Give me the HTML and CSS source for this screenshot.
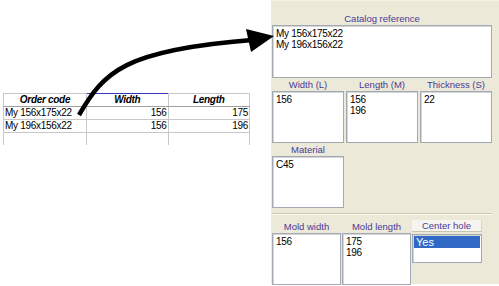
FILE: index.html
```html
<!DOCTYPE html>
<html>
<head>
<meta charset="utf-8">
<link rel="stylesheet" href="styles.css">
</head>
<body>
<div class="page">
  <div class="sheet">
    <table class="grid">
      <tr class="head">
        <th class="c1">Order code</th>
        <th class="c2 sel">Width</th>
        <th class="c3">Length</th>
      </tr>
      <tr>
        <td class="c1">My 156x175x22</td>
        <td class="num">156</td>
        <td class="num">175</td>
      </tr>
      <tr>
        <td class="c1">My 196x156x22</td>
        <td class="num">156</td>
        <td class="num">196</td>
      </tr>
      <tr class="empty">
        <td></td><td></td><td></td>
      </tr>
    </table>
  </div>
  <div class="panel">
    <div class="group">
      <div class="label">Catalog reference</div>
      <div class="box tall-cat">My 156x175x22<br>My 196x156x22</div>
    </div>
    <div class="row3">
      <div class="group">
        <div class="label">Width (L)</div>
        <div class="box b51">156</div>
      </div>
      <div class="group">
        <div class="label">Length (M)</div>
        <div class="box b51">156<br>196</div>
      </div>
      <div class="group">
        <div class="label">Thickness (S)</div>
        <div class="box b51">22</div>
      </div>
    </div>
    <div class="row3">
      <div class="group">
        <div class="label">Material</div>
        <div class="box b51">C45</div>
      </div>
    </div>
    <div class="sep"></div>
    <div class="row-mold">
      <div class="group">
        <div class="label">Mold width</div>
        <div class="box b51">156</div>
      </div>
      <div class="group">
        <div class="label">Mold length</div>
        <div class="box b51">175<br>196</div>
      </div>
      <div class="group">
        <div class="hdr">Center hole</div>
        <div class="box list">
          <div class="selrow">Yes</div>
        </div>
      </div>
    </div>
  </div>
  <svg class="arrow" width="499" height="286" viewBox="0 0 499 286">
    <path d="M79 115 C 104 72, 124 50, 252 40" fill="none" stroke="#000" stroke-width="4.5" stroke-linecap="butt"/>
    <polygon points="246,29 274,36 251,52" fill="#000"/>
  </svg>
</div>
</body>
</html>
```
FILE: styles.css
```css
html, body {
  margin: 0;
  padding: 0;
  background: #fff;
}
body {
  font-family: "Liberation Sans", Arial, sans-serif;
  font-size: 10px;
  color: #000;
}
.page {
  position: relative;
  width: 499px;
  height: 286px;
  display: flex;
  overflow: hidden;
}
.sheet {
  width: 272px;
  padding-top: 93px;
  padding-left: 3px;
  box-sizing: border-box;
}
.grid {
  border-collapse: collapse;
  table-layout: fixed;
  width: 247px;
  letter-spacing: -0.3px;
}
.grid th, .grid td {
  border-left: 1px solid #c8c8c8;
  border-right: 1px solid #c8c8c8;
  border-bottom: 1px solid #c8c8c8;
  padding: 0 1px;
  height: 12px;
  line-height: 12px;
  white-space: nowrap;
  overflow: hidden;
}
.grid th {
  font-weight: bold;
  font-style: italic;
  text-align: center;
  border-top: 1px solid #c8c8c8;
  border-bottom: 1px solid #a0a0a0;
  height: 11px;
}
.grid th.sel {
  border-top: 1px solid #3434c0;
}
.grid .c1 { width: 80px; }
.grid .num { text-align: right; }
.grid tr.empty td {
  height: 12px;
  border-bottom: none;
}
.panel {
  flex: 1;
  background: #ece9d8;
  height: 284px;
  padding: 13px 7px 0 1px;
  box-sizing: border-box;
  display: flex;
  flex-direction: column;
  border-top: 1px solid #f4f2e8;
}
.group {
  display: flex;
  flex-direction: column;
}
.label {
  font-family: "Liberation Sans", Arial, sans-serif;
  font-size: 9.5px;
  color: #4a3a98;
  text-align: center;
  height: 10px;
  line-height: 10px;
  margin-bottom: 1px;
}
.box {
  background: #fff;
  border: 1px solid #a3a9b3;
  box-shadow: inset 1px 1px 0 #d4d6da;
  padding: 2px 3px;
  box-sizing: border-box;
  font-size: 10px;
  line-height: 11px;
  letter-spacing: -0.3px;
}
.tall-cat { height: 53px; }
.b51 { height: 52px; }
.row3 {
  display: grid;
  grid-template-columns: 72px 72px 72px;
  column-gap: 2px;
  margin-top: 2px;
}
.sep {
  height: 0;
  border-top: 1px solid #c9c6b4;
  border-bottom: 1px solid #fafaf5;
  margin: 5px 0 5px 0;
}
.row-mold {
  display: grid;
  grid-template-columns: 69px 69px 70px;
  column-gap: 1px;
}
.row-mold .label {
  margin-top: 2px;
  margin-bottom: 1px;
}
.hdr {
  height: 11px;
  line-height: 11px;
  font-size: 9.5px;
  color: #4a3a98;
  text-align: center;
  background: #f5f4ef;
  border-bottom: 1px solid #c8c5b2;
  border-right: 1px solid #d8d5c5;
  margin-bottom: 2px;
}
.list {
  height: 29px;
  padding: 1px;
}
.selrow {
  background: #316ac5;
  color: #fff;
  font-size: 11px;
  line-height: 12px;
  padding-left: 2px;
  letter-spacing: 0;
}
.arrow {
  position: absolute;
  left: 0;
  top: 0;
  pointer-events: none;
}
```
